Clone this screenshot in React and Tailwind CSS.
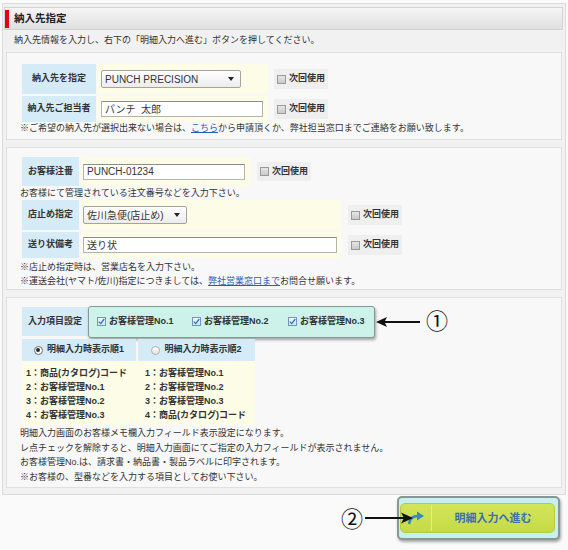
import React from "react";

const Box = ({ checked }) =>
  checked ? (
    <span className="inline-flex w-[9px] h-[9px] shrink-0 items-center justify-center border border-[#6f97c4] bg-gradient-to-b from-[#f4f9ff] to-[#d4e4f5]">
      <svg width="7" height="7" viewBox="0 0 7 7">
        <path d="M0.8 3.6 L2.8 5.6 L6.2 1" fill="none" stroke="#2f6fb8" strokeWidth="1.3" />
      </svg>
    </span>
  ) : (
    <span className="inline-block w-[9px] h-[9px] shrink-0 border border-[#9a9a9a] bg-gradient-to-b from-[#e6e6e6] to-[#c9c9c9]" />
  );

const Next = () => (
  <div className="flex items-center gap-[3px] bg-[#efefef] px-[3px] py-[3px]">
    <Box />
    <span className="font-bold">次回使用</span>
  </div>
);

const Select = ({ w, children }) => (
  <div
    className={`${w} h-[18px] border border-[#a3a3a3] rounded-[2px] bg-gradient-to-b from-white to-[#ececec] flex items-center justify-between pl-[3px] pr-[6px] text-[10px]`}
  >
    <span>{children}</span>
    <svg width="6" height="4" viewBox="0 0 6 4">
      <path d="M0 0 L6 0 L3 4 Z" fill="#222" />
    </svg>
  </div>
);

const Input = ({ w, children }) => (
  <div
    className={`${w} h-[16px] border border-[#b3b3b3] border-t-[#8c8c8c] bg-white flex items-center px-[3px] text-[10px]`}
  >
    {children}
  </div>
);

const Label = ({ w, h, children }) => (
  <div className={`${w} ${h} bg-[#d5ebf7] flex items-center justify-center font-bold shrink-0`}>
    {children}
  </div>
);

const Radio = ({ on }) =>
  on ? (
    <span className="w-[9px] h-[9px] rounded-full border border-[#6b6b6b] bg-white flex items-center justify-center">
      <span className="w-[4px] h-[4px] rounded-full bg-[#2b2b2b]" />
    </span>
  ) : (
    <span className="w-[9px] h-[9px] rounded-full border border-[#b0b0b0] bg-gradient-to-b from-white to-[#e2e2e2]" />
  );

export default function App() {
  return (
    <div className="relative w-[568px] h-[550px] bg-[#fafafa] overflow-hidden text-[9px] text-[#333] font-['Liberation_Sans','Noto_Sans_CJK_JP',sans-serif]">
      <div className="mx-[2px] mt-[3px] h-[492px] border border-[#dcdcdc] bg-[#f1f1f1] flex flex-col">
        {/* header */}
        <div className="ml-[1px] mr-[2px] mt-[3px] h-[23px] border border-[#d3d3d3] bg-gradient-to-b from-[#f5f5f5] to-[#e0e0e0] flex items-center">
          <div className="w-[4px] h-[18px] bg-[#e60012]" />
          <span className="ml-[5px] text-[10.5px] font-bold text-[#222]">納入先指定</span>
        </div>
        <div className="h-[22px] flex items-center pl-[11px]">
          納入先情報を入力し、右下の「明細入力へ進む」ボタンを押してください。
        </div>

        {/* section 1 */}
        <div className="mx-[3px] h-[88px] border border-[#e0e0e0] bg-[#f8f8f8] pt-[11px] pl-[13px] flex flex-col">
          <div className="ml-[2px] flex flex-col gap-[2px]">
            <div className="flex items-center">
              <Label w="w-[74px]" h="h-[30px]">納入先を指定</Label>
              <div className="ml-[1px] w-[171px] h-[30px] bg-[#fcfce7] flex items-center pl-[4px]">
                <Select w="w-[140px]">PUNCH PRECISION</Select>
              </div>
              <div className="ml-[6px]">
                <Next />
              </div>
            </div>
            <div className="flex items-center">
              <Label w="w-[74px]" h="h-[26px]">納入先ご担当者</Label>
              <div className="ml-[1px] w-[171px] h-[26px] bg-[#fcfce7] flex items-center pl-[4px]">
                <Input w="w-[162px]">パンチ&nbsp;&nbsp;太郎</Input>
              </div>
              <div className="ml-[6px]">
                <Next />
              </div>
            </div>
          </div>
          <div className="leading-[12px] mt-0">
            ※ご希望の納入先が選択出来ない場合は、
            <span className="text-[#1f62b5] underline">こちら</span>
            から申請頂くか、弊社担当窓口までご連絡をお願い致します。
          </div>
        </div>

        {/* section 2 */}
        <div className="mx-[3px] mt-[7px] h-[143px] border border-[#e0e0e0] bg-[#f8f8f8] pt-[9px] pl-[13px] flex flex-col">
          <div className="ml-[2px] flex items-center">
            <Label w="w-[57px]" h="h-[29px]">お客様注番</Label>
            <div className="ml-[2px] w-[169px] h-[29px] bg-[#fcfce7] flex items-center pl-[2px]">
              <Input w="w-[162px]">PUNCH-01234</Input>
            </div>
            <div className="ml-[7px]">
              <Next />
            </div>
          </div>
          <div className="leading-[14px]">お客様にて管理されている注文番号などを入力下さい。</div>
          <div className="ml-[2px] flex flex-col gap-[2px]">
            <div className="flex items-center">
              <Label w="w-[57px]" h="h-[30px]">店止め指定</Label>
              <div className="ml-[2px] w-[260px] h-[30px] bg-[#fcfce7] flex items-center pl-[2px]">
                <Select w="w-[104px]">佐川急便(店止め)</Select>
              </div>
              <div className="ml-[7px]">
                <Next />
              </div>
            </div>
            <div className="flex items-center">
              <Label w="w-[57px]" h="h-[26px]">送り状備考</Label>
              <div className="ml-[2px] w-[260px] h-[26px] bg-[#fcfce7] flex items-center pl-[2px]">
                <Input w="w-[254px]">送り状</Input>
              </div>
              <div className="ml-[7px]">
                <Next />
              </div>
            </div>
          </div>
          <div className="mt-[2px] leading-[14px]">
            <div>※店止め指定時は、営業店名を入力下さい。</div>
            <div>
              ※運送会社(ヤマト/佐川)指定につきましては、
              <span className="text-[#1f62b5] underline">弊社営業窓口まで</span>
              お問合せ願います。
            </div>
          </div>
        </div>

        {/* section 3 */}
        <div className="mx-[3px] mt-[7px] h-[191px] border border-[#e0e0e0] bg-[#f8f8f8] pt-[9px] pl-[13px] flex flex-col">
          <div className="ml-[2px] h-[29px] flex items-center">
            <Label w="w-[66px]" h="h-[29px]">入力項目設定</Label>
            <div className="w-[287px] h-[32px] rounded-[3px] border border-[#879996] bg-[#cdf2ea] shadow-[1px_2px_3px_rgba(0,0,0,0.35)] flex items-center pl-[8px] font-bold">
              <div className="flex items-center gap-[3px] w-[95px]">
                <Box checked />
                <span>お客様管理No.1</span>
              </div>
              <div className="flex items-center gap-[3px] w-[96px]">
                <Box checked />
                <span>お客様管理No.2</span>
              </div>
              <div className="flex items-center gap-[3px]">
                <Box checked />
                <span>お客様管理No.3</span>
              </div>
            </div>
          </div>
          <div className="ml-[2px] mt-[3px] flex gap-[2px] font-bold">
            <div className="w-[114px] h-[22px] bg-[#d5ebf7] flex items-center justify-center gap-[4px]">
              <Radio on />
              <span>明細入力時表示順1</span>
            </div>
            <div className="w-[117px] h-[22px] bg-[#d5ebf7] flex items-center justify-center gap-[4px]">
              <Radio />
              <span>明細入力時表示順2</span>
            </div>
          </div>
          <div className="ml-[2px] w-[233px] h-[64px] bg-[#fcfce7] flex pt-[5px] pl-[4px] font-bold leading-[14px]">
            <div className="w-[119px]">
              <div>1：商品(カタログ)コード</div>
              <div>2：お客様管理No.1</div>
              <div>3：お客様管理No.2</div>
              <div>4：お客様管理No.3</div>
            </div>
            <div>
              <div>1：お客様管理No.1</div>
              <div>2：お客様管理No.2</div>
              <div>3：お客様管理No.3</div>
              <div>4：商品(カタログ)コード</div>
            </div>
          </div>
          <div className="mt-[1px] leading-[14.5px]">
            <div>明細入力画面のお客様メモ欄入力フィールド表示設定になります。</div>
            <div>レ点チェックを解除すると、明細入力画面にてご指定の入力フィールドが表示されません。</div>
            <div>お客様管理No.は、請求書・納品書・製品ラベルに印字されます。</div>
            <div>※お客様の、型番などを入力する項目としてお使い下さい。</div>
          </div>
        </div>
      </div>

      {/* button */}
      <div className="flex justify-end pr-[8px] mt-[1px]">
        <div className="w-[163px] h-[44px] rounded-[5px] border-2 border-[#8a9694] bg-[#c8f1ee] shadow-[1px_2px_3px_rgba(0,0,0,0.35)] pt-[5px] pl-[1px]">
          <div className="w-[155px] h-[30px] rounded-[5px] border border-[#b6cb3d] bg-gradient-to-b from-[#d3e65a] to-[#c4da45] flex items-center">
            <div className="w-[30px] h-full flex items-center justify-center">
              <svg width="20" height="14" viewBox="0 0 20 14">
                <path d="M3 13 Q4 5 12 5" fill="none" stroke="#3a86c8" strokeWidth="2.5" />
                <path d="M11 0.5 L18 5 L11 9.5 Z" fill="#3a86c8" />
              </svg>
            </div>
            <div className="w-[1px] h-[26px] bg-[#9fb23a] border-r border-[#e3f08a]" />
            <div className="flex-1 flex items-center justify-center text-[11px] font-bold text-[#3d6db3]">
              明細入力へ進む
            </div>
          </div>
        </div>
      </div>

      {/* annotations */}
      <svg className="absolute left-[376px] top-[316px]" width="46" height="12" viewBox="0 0 46 12">
        <line x1="8" y1="6" x2="44" y2="6" stroke="#111" strokeWidth="2.2" />
        <path d="M0 6 L11 1 L8.5 6 L11 11 Z" fill="#111" />
      </svg>
      <div className="absolute left-[426px] top-[308px] text-[22px] leading-none text-[#111] font-['Noto_Sans_CJK_JP',sans-serif]">
        ①
      </div>
      <div className="absolute left-[341px] top-[506px] text-[22px] leading-none text-[#111] font-['Noto_Sans_CJK_JP',sans-serif]">
        ②
      </div>
      <svg className="absolute left-[365px] top-[511px]" width="50" height="14" viewBox="0 0 50 14">
        <line x1="0" y1="7" x2="40" y2="7" stroke="#111" strokeWidth="2.2" />
        <path d="M48 7 L36 1.5 L39 7 L36 12.5 Z" fill="#111" />
      </svg>
    </div>
  );
}
